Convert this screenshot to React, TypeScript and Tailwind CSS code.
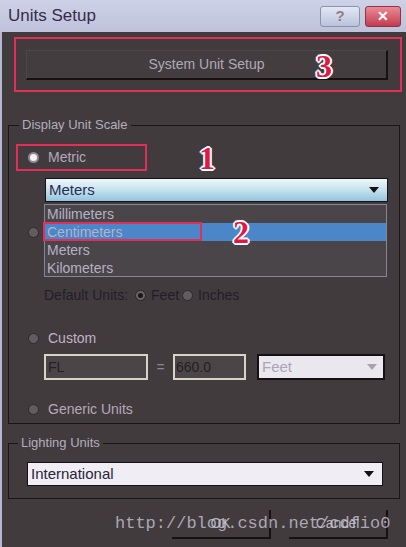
import React from 'react';

const font = { fontFamily: '"Liberation Sans", Arial, sans-serif' };

type RadioProps = { variant?: 'lit' | 'dark' | 'checked' };

const Radio = ({ variant = 'dark' }: RadioProps) => {
  if (variant === 'lit') {
    return (
      <span className="w-[11px] h-[11px] rounded-full bg-[#8e8a90] flex items-center justify-center shrink-0">
        <span className="w-[7px] h-[7px] rounded-full bg-[#f4f2f6]" />
      </span>
    );
  }
  if (variant === 'checked') {
    return (
      <span className="w-[11px] h-[11px] rounded-full bg-[#6a6468] border border-[#2a2628] flex items-center justify-center shrink-0">
        <span className="w-[5px] h-[5px] rounded-full bg-[#1a1618]" />
      </span>
    );
  }
  return <span className="block w-[11px] h-[11px] rounded-full bg-[#625c60] border border-[#2e2a2c] shrink-0" />;
};

const Arrow = ({ color = '#141014' }: { color?: string }) => (
  <svg width="10" height="6" viewBox="0 0 10 6">
    <path d="M0 0 L10 0 L5 6 Z" fill={color} />
  </svg>
);

const Mark = ({ n, className }: { n: string; className: string }) => (
  <span
    className={`absolute text-[32px] leading-none font-bold text-[#e01848] [text-shadow:1px_1px_0_#fff,-1px_-1px_0_#fff,1px_-1px_0_#fff,-1px_1px_0_#fff,0_2px_0_#fff,2px_0_0_#fff,0_-2px_0_#fff,-2px_0_0_#fff] ${className}`}
    style={{ fontFamily: '"Liberation Serif", "Times New Roman", serif' }}
  >
    {n}
  </span>
);

const units = ['Millimeters', 'Centimeters', 'Meters', 'Kilometers'];

export default function App() {
  return (
    <div className="relative w-[406px] h-[547px] overflow-hidden bg-[#413b3e] flex flex-col" style={font}>
      {/* title bar */}
      <div className="h-[32px] shrink-0 bg-gradient-to-b from-[#ced2e8] to-[#bec2da] flex items-center pl-[8px] pr-[5px]">
        <span className="text-[17px] text-[#382a48]">Units Setup</span>
        <div className="ml-auto flex items-center gap-[5px]">
          <div className="w-[40px] h-[21px] rounded-[3px] border border-[#8c92aa] bg-gradient-to-b from-[#e2e8f4] to-[#b8c2da] flex items-center justify-center text-[15px] font-bold text-[#9a7888]">
            ?
          </div>
          <div className="w-[36px] h-[21px] rounded-[3px] border border-[#8a3444] bg-gradient-to-b from-[#ea8a96] to-[#c23a52] flex items-center justify-center text-[14px] font-bold text-white">
            ✕
          </div>
        </div>
      </div>

      {/* body */}
      <div className="flex-1 flex flex-col px-[6px] border-l-2 border-[#b4b8d2]">
        <button className="mt-[18px] ml-[18px] mr-[12px] h-[30px] bg-[#433d40] border-b-2 border-r-2 border-[#161214] border-t border-l border-t-[#4c4649] border-l-[#4c4649] text-[14px] text-[#aeaab8]">
          System Unit Setup
        </button>

        <fieldset className="mt-[37px] border border-[#1a1618] flex flex-col pb-[5px]">
          <legend className="ml-[10px] px-[3px] text-[13px] leading-[16px] text-[#b2aebc]">Display Unit Scale</legend>

          <div className="mt-[15px] h-[18px] pl-[19px] flex items-center gap-[9px]">
            <Radio variant="lit" />
            <span className="text-[14px] text-[#b4a8bc]">Metric</span>
          </div>

          <div className="mt-[12px] ml-[36px] mr-[11px] h-[24px] border border-[#141014] bg-gradient-to-b from-[#eef8fa] via-[#c4e2ee] to-[#94c4de] flex items-center pl-[3px] pr-[8px]">
            <span className="text-[15px] text-[#2a2c50]">Meters</span>
            <span className="ml-auto">
              <Arrow />
            </span>
          </div>

          <div className="h-[84px] pl-[19px] pt-[25px]">
            <Radio />
          </div>

          <div className="h-[18px] pl-[35px] flex items-center text-[14px] text-[#221e28]">
            <span>Default Units:</span>
            <span className="ml-[7px]">
              <Radio variant="checked" />
            </span>
            <span className="ml-[5px]">Feet</span>
            <span className="ml-[3px]">
              <Radio />
            </span>
            <span className="ml-[5px]">Inches</span>
          </div>

          <div className="mt-[25px] h-[18px] pl-[19px] flex items-center gap-[9px]">
            <Radio />
            <span className="text-[14px] text-[#c2b2c4]">Custom</span>
          </div>

          <div className="mt-[7px] h-[26px] pl-[35px] flex items-stretch">
            <div className="w-[104px] border-2 border-[#d6d4c6] bg-[#4c4548] flex items-center pl-[2px] text-[14px] text-[#242024]">
              FL
            </div>
            <div className="w-[25px] flex items-center justify-center text-[14px] text-[#8c8690]">=</div>
            <div className="w-[73px] border-2 border-[#d6d4c6] bg-[#4c4548] flex items-center pl-[1px] text-[14px] text-[#242024]">
              660.0
            </div>
            <div className="ml-[11px] w-[128px] border-2 border-[#141014] bg-[#ebe7ee] flex items-center pl-[3px] pr-[6px]">
              <span className="text-[15px] text-[#aca4b4]">Feet</span>
              <span className="ml-auto">
                <Arrow color="#a8a2ac" />
              </span>
            </div>
          </div>

          <div className="mt-[20px] h-[18px] pl-[19px] flex items-center gap-[9px]">
            <Radio />
            <span className="text-[14px] text-[#b4aab8]">Generic Units</span>
          </div>
        </fieldset>

        <fieldset className="mt-[11px] border border-[#1a1618] flex flex-col pb-[12px]">
          <legend className="ml-[9px] px-[3px] text-[13px] leading-[16px] text-[#b2aebc]">Lighting Units</legend>
          <div className="mt-[11px] ml-[18px] mr-[16px] h-[24px] border border-[#141014] bg-[#f0eef4] flex items-center pl-[3px] pr-[8px]">
            <span className="text-[15px] text-[#282638]">International</span>
            <span className="ml-auto">
              <Arrow />
            </span>
          </div>
        </fieldset>

        <div className="mt-[11px] ml-[164px] flex gap-[18px]">
          <button className="w-[99px] h-[29px] border-b-2 border-r-2 border-[#161214] text-[14px] text-[#b8b4c0]">OK</button>
          <button className="w-[99px] h-[29px] border-b-2 border-r-2 border-[#161214] text-[14px] text-[#b8b4c0]">Cancel</button>
        </div>
      </div>

      {/* dropdown list, open over the form */}
      <div className="absolute left-[44px] top-[204px] w-[343px] h-[73px] border border-[#8a8690] bg-[#4a4548] flex flex-col">
        {units.map((u) => (
          <div
            key={u}
            className={`h-[18px] flex items-center pl-[2px] text-[14px] text-[#b6b2c6] ${u === 'Centimeters' ? 'bg-[#4a86c8]' : ''}`}
          >
            {u}
          </div>
        ))}
      </div>

      {/* annotations */}
      <div className="absolute left-[14px] top-[37px] w-[388px] h-[55px] border-2 border-[#e0305a]" />
      <div className="absolute left-[16px] top-[144px] w-[131px] h-[27px] border-2 border-[#e0305a]" />
      <div className="absolute left-[43px] top-[222px] w-[159px] h-[19px] border-2 border-[#e0305a]" />
      <Mark n="3" className="left-[316px] top-[50px]" />
      <Mark n="1" className="left-[199px] top-[142px]" />
      <Mark n="2" className="left-[233px] top-[216px]" />

      {/* watermark */}
      <span
        className="absolute left-[115px] top-[511px] text-[17px] text-[#d0ccd8]/75"
        style={{ fontFamily: '"Liberation Mono", "Courier New", monospace' }}
      >
        http://blog.csdn.net/cdfio0
      </span>
    </div>
  );
}
